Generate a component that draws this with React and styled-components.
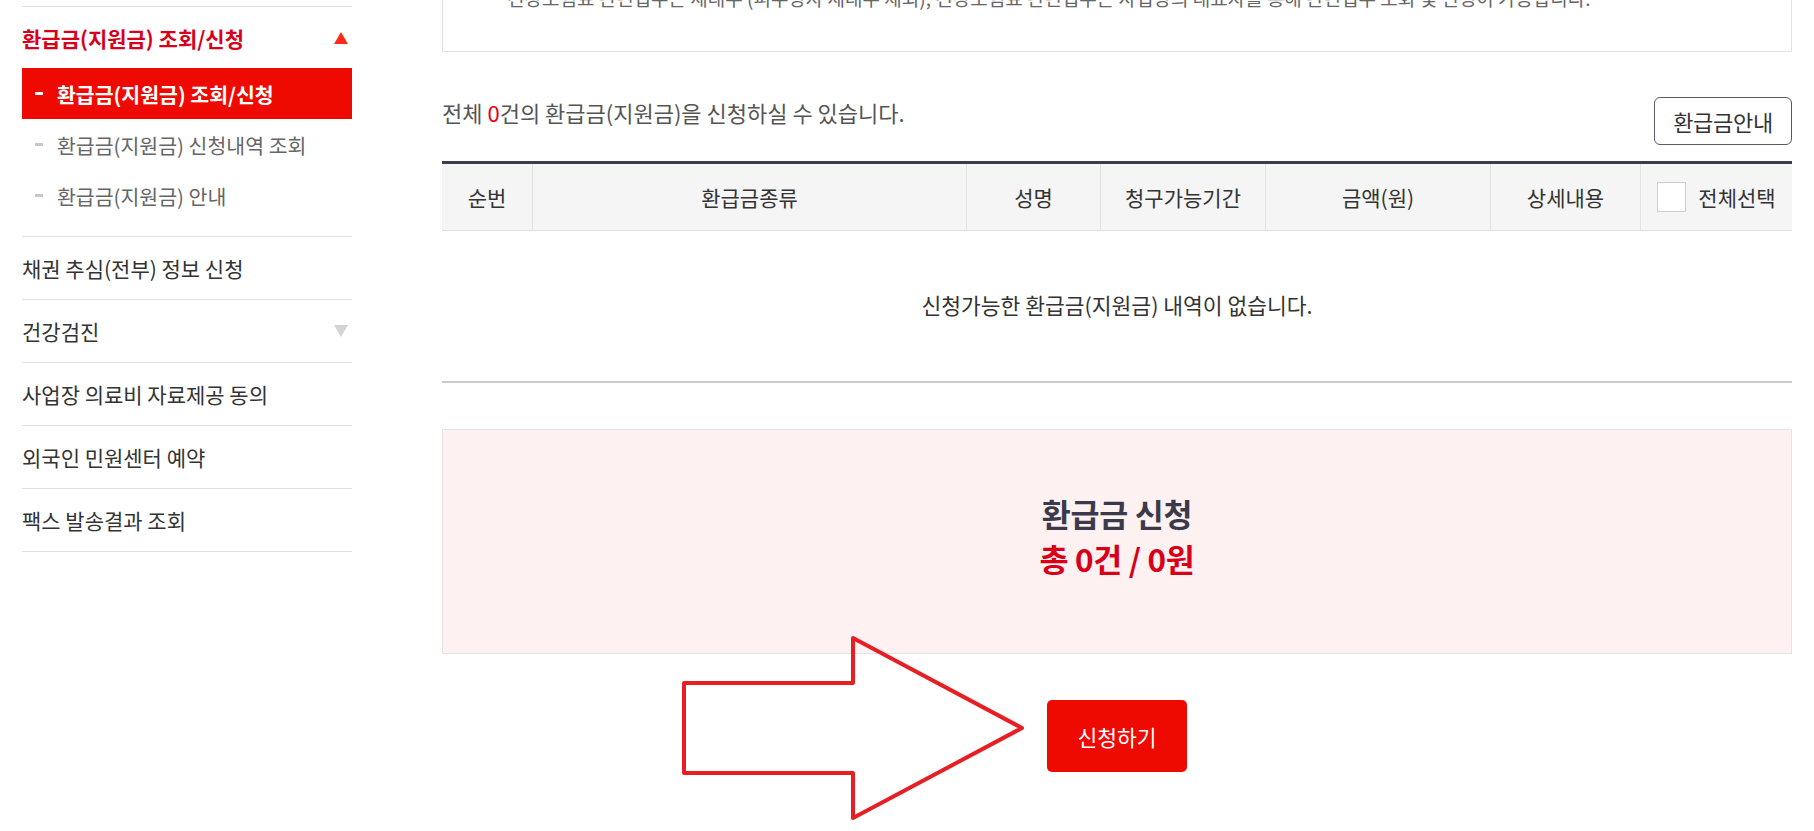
import React from "react";
import styled, { createGlobalStyle } from "styled-components";

const GlobalStyle = createGlobalStyle`
  html, body {
    margin: 0;
    padding: 0;
    background: #fff;
    overflow: hidden;
  }
  body {
    font-family: "Noto Sans CJK KR", "Noto Sans", sans-serif;
    color: #333;
  }
`;

// Styled components
const Page = styled.div`
  display: flex;
  gap: 90px;
  padding: 0 22px;
  height: 831px;
`;
const Side = styled.nav`
  width: 330px;
  flex-shrink: 0;
  padding-top: 6px;
`;
const Group = styled.div`
  border-top: 1px solid #e1e1e1;
  ${({ last }) => last && `border-bottom: 1px solid #e1e1e1;`}
`;
const GroupHead = styled.div`
  height: ${({ h }) => h || 62}px;
  display: flex;
  align-items: center;
  justify-content: space-between;
  padding-right: 4px;
  font-size: 21px;
  color: ${({ active }) => (active ? "#d7001b" : "#333")};
  font-weight: ${({ active }) => (active ? 700 : 400)};
`;
const Tri = styled.span`
  width: 0;
  height: 0;
  border-left: 7.5px solid transparent;
  border-right: 7.5px solid transparent;
  ${({ up }) =>
    up
      ? `border-bottom: 12px solid #ff2a1a;`
      : `border-top: 12px solid #d3d3d3;`}
`;
const SubList = styled.div`
  padding-bottom: 15px;
`;
const SubItem = styled.div`
  height: 51px;
  display: flex;
  align-items: center;
  padding-left: 13px;
  font-size: 20.5px;
  background: ${({ active }) => (active ? "#ee0a00" : "transparent")};
  color: ${({ active }) => (active ? "#fff" : "#666")};
  font-weight: ${({ active }) => (active ? 700 : 400)};
  &::before {
    content: "";
    width: 8px;
    height: 3px;
    margin-right: 14px;
    background: ${({ active }) => (active ? "#fff" : "#c8c8c8")};
  }
`;

const Main = styled.main`
  flex: 1;
  display: flex;
  flex-direction: column;
`;
const NoticeBox = styled.div`
  margin-top: -40px;
  border: 1px solid #e2e2e2;
  padding: 24px 24px 40px 64px;
  font-size: 19px;
  line-height: 26px;
  color: #666;
  white-space: nowrap;
  overflow: hidden;
`;
const SummaryRow = styled.div`
  margin-top: 45px;
  display: flex;
  justify-content: space-between;
  align-items: flex-start;
`;
const SummaryText = styled.p`
  margin: 0;
  font-size: 22px;
  line-height: 30px;
  color: #555;
`;
const Red = styled.span`
  color: #e60012;
`;
const GuideButton = styled.button`
  width: 138px;
  height: 48px;
  border: 1px solid #5a5a66;
  border-radius: 6px;
  background: #fff;
  font-family: inherit;
  font-size: 22px;
  letter-spacing: -0.3px;
  color: #333;
  cursor: pointer;
`;
const Table = styled.table`
  margin-top: 16px;
  width: 100%;
  border-collapse: separate;
  border-spacing: 0;
  border-top: 3px solid #3c3c4c;
  table-layout: fixed;
`;
const Th = styled.th`
  height: 66px;
  padding: 0;
  background: #f5f5f5;
  border-bottom: 1px solid #dedede;
  border-left: ${({ first }) => (first ? "none" : "1px solid #e2e2e2")};
  font-size: 21px;
  font-weight: 400;
  color: #333;
  text-align: center;
`;
const CheckWrap = styled.label`
  display: flex;
  align-items: center;
  justify-content: center;
  gap: 12px;
`;
const CheckBox = styled.span`
  width: 27px;
  height: 28px;
  border: 1px solid #cfcfcf;
  background: #fff;
`;
const EmptyCell = styled.td`
  height: 146px;
  padding: 0 0 4px;
  border-bottom: 2px solid #c9cbce;
  text-align: center;
  font-size: 21.5px;
  color: #333;
`;
const TotalBox = styled.div`
  margin-top: 46px;
  height: 225px;
  padding-bottom: 12px;
  box-sizing: border-box;
  border: 1px solid #e6e3e3;
  background: #fdf1f1;
  display: flex;
  flex-direction: column;
  align-items: center;
  justify-content: center;
  font-size: 31.5px;
  line-height: 45px;
  font-weight: 700;
  letter-spacing: -0.3px;
`;
const TotalTitle = styled.div`
  color: #3a3a4a;
`;
const TotalAmount = styled.div`
  color: #d80018;
`;
const SubmitRow = styled.div`
  position: relative;
  margin-top: 46px;
  display: flex;
  justify-content: center;
`;
const SubmitButton = styled.button`
  width: 140px;
  height: 72px;
  border: none;
  border-radius: 5px;
  background: #ee0a00;
  color: #fff;
  font-family: inherit;
  font-size: 21.5px;
  cursor: pointer;
`;
const ArrowMark = styled.svg`
  position: absolute;
  left: 238px;
  top: -66px;
  pointer-events: none;
`;

const columns = [
  { label: "순번", width: 90 },
  { label: "환급금종류", width: 434 },
  { label: "성명", width: 134 },
  { label: "청구가능기간", width: 165 },
  { label: "금액(원)", width: 225 },
  { label: "상세내용", width: 150 },
];

const App = () => {
  return (
    <>
      <GlobalStyle />
      <Page>
        <Side>
          <Group>
            <GroupHead active h={61}>
              환급금(지원금) 조회/신청
              <Tri up />
            </GroupHead>
            <SubList>
              <SubItem active>환급금(지원금) 조회/신청</SubItem>
              <SubItem>환급금(지원금) 신청내역 조회</SubItem>
              <SubItem>환급금(지원금) 안내</SubItem>
            </SubList>
          </Group>
          <Group>
            <GroupHead>채권 추심(전부) 정보 신청</GroupHead>
          </Group>
          <Group>
            <GroupHead>
              건강검진
              <Tri />
            </GroupHead>
          </Group>
          <Group>
            <GroupHead>사업장 의료비 자료제공 동의</GroupHead>
          </Group>
          <Group>
            <GroupHead>외국인 민원센터 예약</GroupHead>
          </Group>
          <Group last>
            <GroupHead>팩스 발송결과 조회</GroupHead>
          </Group>
        </Side>

        <Main>
          <NoticeBox>
            건강보험료 관련업무는 세대주 (피부양자 세대주 제외), 건강보험료 관련업무는 사업장의 대표자를 통해 관련업무 조회 및 신청이 가능합니다.
          </NoticeBox>

          <SummaryRow>
            <SummaryText>
              전체 <Red>0</Red>건의 환급금(지원금)을 신청하실 수 있습니다.
            </SummaryText>
            <GuideButton>환급금안내</GuideButton>
          </SummaryRow>

          <Table>
            <colgroup>
              {columns.map((c) => (
                <col key={c.label} style={{ width: c.width }} />
              ))}
              <col />
            </colgroup>
            <thead>
              <tr>
                {columns.map((c, i) => (
                  <Th key={c.label} first={i === 0}>
                    {c.label}
                  </Th>
                ))}
                <Th>
                  <CheckWrap>
                    <CheckBox />
                    전체선택
                  </CheckWrap>
                </Th>
              </tr>
            </thead>
            <tbody>
              <tr>
                <EmptyCell colSpan={7}>
                  신청가능한 환급금(지원금) 내역이 없습니다.
                </EmptyCell>
              </tr>
            </tbody>
          </Table>

          <TotalBox>
            <TotalTitle>환급금 신청</TotalTitle>
            <TotalAmount>총 0건 / 0원</TotalAmount>
          </TotalBox>

          <SubmitRow>
            <ArrowMark width="348" height="190" viewBox="0 0 348 190">
              <polygon
                points="4,49 173,49 173,4 342,94 173,184 173,139 4,139"
                fill="none"
                stroke="#e81e25"
                strokeWidth="4"
                strokeLinejoin="round"
              />
            </ArrowMark>
            <SubmitButton>신청하기</SubmitButton>
          </SubmitRow>
        </Main>
      </Page>
    </>
  );
};

export default App;
